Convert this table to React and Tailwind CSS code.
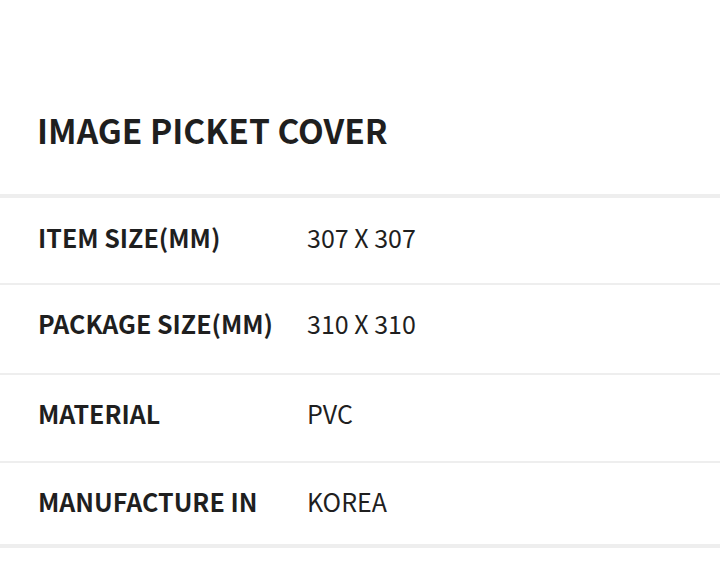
// 상품 상세 스펙 표
const specs = [
  { label: "ITEM SIZE(MM)", value: "307 X 307", h: "h-[85px]" },
  { label: "PACKAGE SIZE(MM)", value: "310 X 310", h: "h-[90px]" },
  { label: "MATERIAL", value: "PVC", h: "h-[88px]" },
  { label: "MANUFACTURE IN", value: "KOREA", h: "h-[83px]" },
];

export default function App() {
  return (
    <div
      className="w-[720px] h-[564px] bg-white text-[#1f1f1f] overflow-hidden"
      style={{ fontFamily: '"Noto Sans CJK KR", "Noto Sans", sans-serif' }}
    >
      <h1 className="pt-[106px] pb-[40px] pl-[37px] text-[33.5px] font-bold leading-[48px]">
        IMAGE PICKET COVER
      </h1>

      <div className="border-t-4 border-b-4 border-[#eeeeee]">
        {specs.map((s, i) => (
          <div
            key={s.label}
            className={`flex items-start pl-[38px] text-[25px] leading-[36px] ${s.h} ${
              i > 0 ? "border-t-2 border-[#eeeeee] pt-[20px]" : "pt-[21px]"
            }`}
          >
            <div className="w-[269px] font-bold">{s.label}</div>
            <div>{s.value}</div>
          </div>
        ))}
      </div>
    </div>
  );
}
